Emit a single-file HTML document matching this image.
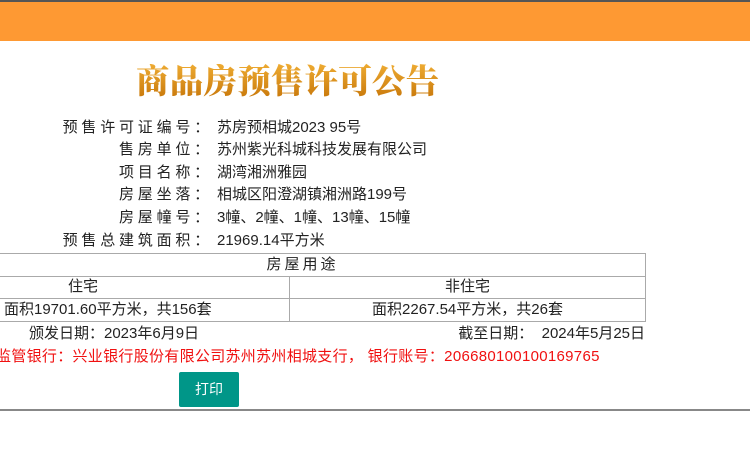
<!DOCTYPE html>
<html><head><meta charset="utf-8"><style>
*{margin:0;padding:0;box-sizing:border-box}
body{width:750px;height:450px;background:#fff;position:relative;overflow:hidden;font-family:"Liberation Sans","Noto Sans CJK SC",sans-serif;color:#222;font-size:15px}
.top{position:absolute;left:0;top:0;width:750px;height:41px;background:#fe9933;border-top:2px solid #555}
.title{position:absolute;left:136px;top:57px;font-family:"Noto Serif CJK SC",serif;font-weight:900;font-size:33.5px;letter-spacing:0.2px;color:#d68b1c;background:linear-gradient(#f5b53a,#c67508);-webkit-background-clip:text;background-clip:text;-webkit-text-fill-color:transparent;line-height:44px}
.row{position:absolute;left:0;height:22px;line-height:22px;white-space:nowrap}
.lab{position:absolute;right:537px;text-align:right;letter-spacing:3.8px}
.val{position:absolute;left:217px}
table{position:absolute;left:-41px;top:253px;width:687px;border-collapse:collapse}
td{border:1px solid #aaa;height:22.5px;text-align:center;font-size:15px;line-height:20px}
td.l{text-align:left}
.abs{position:absolute;white-space:nowrap;line-height:22px}
.btn{position:absolute;left:179px;top:372px;width:60px;height:35px;background:#009688;color:#fff;text-align:center;line-height:35px;font-size:14px;border-radius:2px}
.line{position:absolute;left:0;top:409px;width:750px;height:2px;background:#888}
</style></head><body>
<div class="top"></div>
<div class="title">商品房预售许可公告</div>
<div class="row" style="top:117px;width:750px"><span class="lab">预售许可证编号：</span><span class="val">苏房预相城2023 95号</span></div>
<div class="row" style="top:139px;width:750px"><span class="lab">售房单位：</span><span class="val">苏州紫光科城科技发展有限公司</span></div>
<div class="row" style="top:162px;width:750px"><span class="lab">项目名称：</span><span class="val">湖湾湘洲雅园</span></div>
<div class="row" style="top:184px;width:750px"><span class="lab">房屋坐落：</span><span class="val">相城区阳澄湖镇湘洲路199号</span></div>
<div class="row" style="top:207px;width:750px"><span class="lab">房屋幢号：</span><span class="val">3幢、2幢、1幢、13幢、15幢</span></div>
<div class="row" style="top:230px;width:750px"><span class="lab">预售总建筑面积：</span><span class="val">21969.14平方米</span></div>
<table>
<tr><td colspan="2" style="letter-spacing:3px">房屋用途</td></tr>
<tr><td class="l" style="width:330px;padding-left:108px">住宅</td><td>非住宅</td></tr>
<tr><td class="l" style="padding-left:44px">面积19701.60平方米，共156套</td><td>面积2267.54平方米，共26套</td></tr>
</table>
<div class="abs" style="left:29px;top:323px">颁发日期：2023年6月9日</div>
<div class="abs" style="right:105px;top:323px">截至日期：&nbsp;&nbsp;2024年5月25日</div>
<div class="abs" style="left:-4px;top:346px;color:#f01010;letter-spacing:0.3px">监管银行：兴业银行股份有限公司苏州苏州相城支行，&nbsp;银行账号：206680100100169765</div>
<div class="btn">打印</div>
<div class="line"></div>
</body></html>
